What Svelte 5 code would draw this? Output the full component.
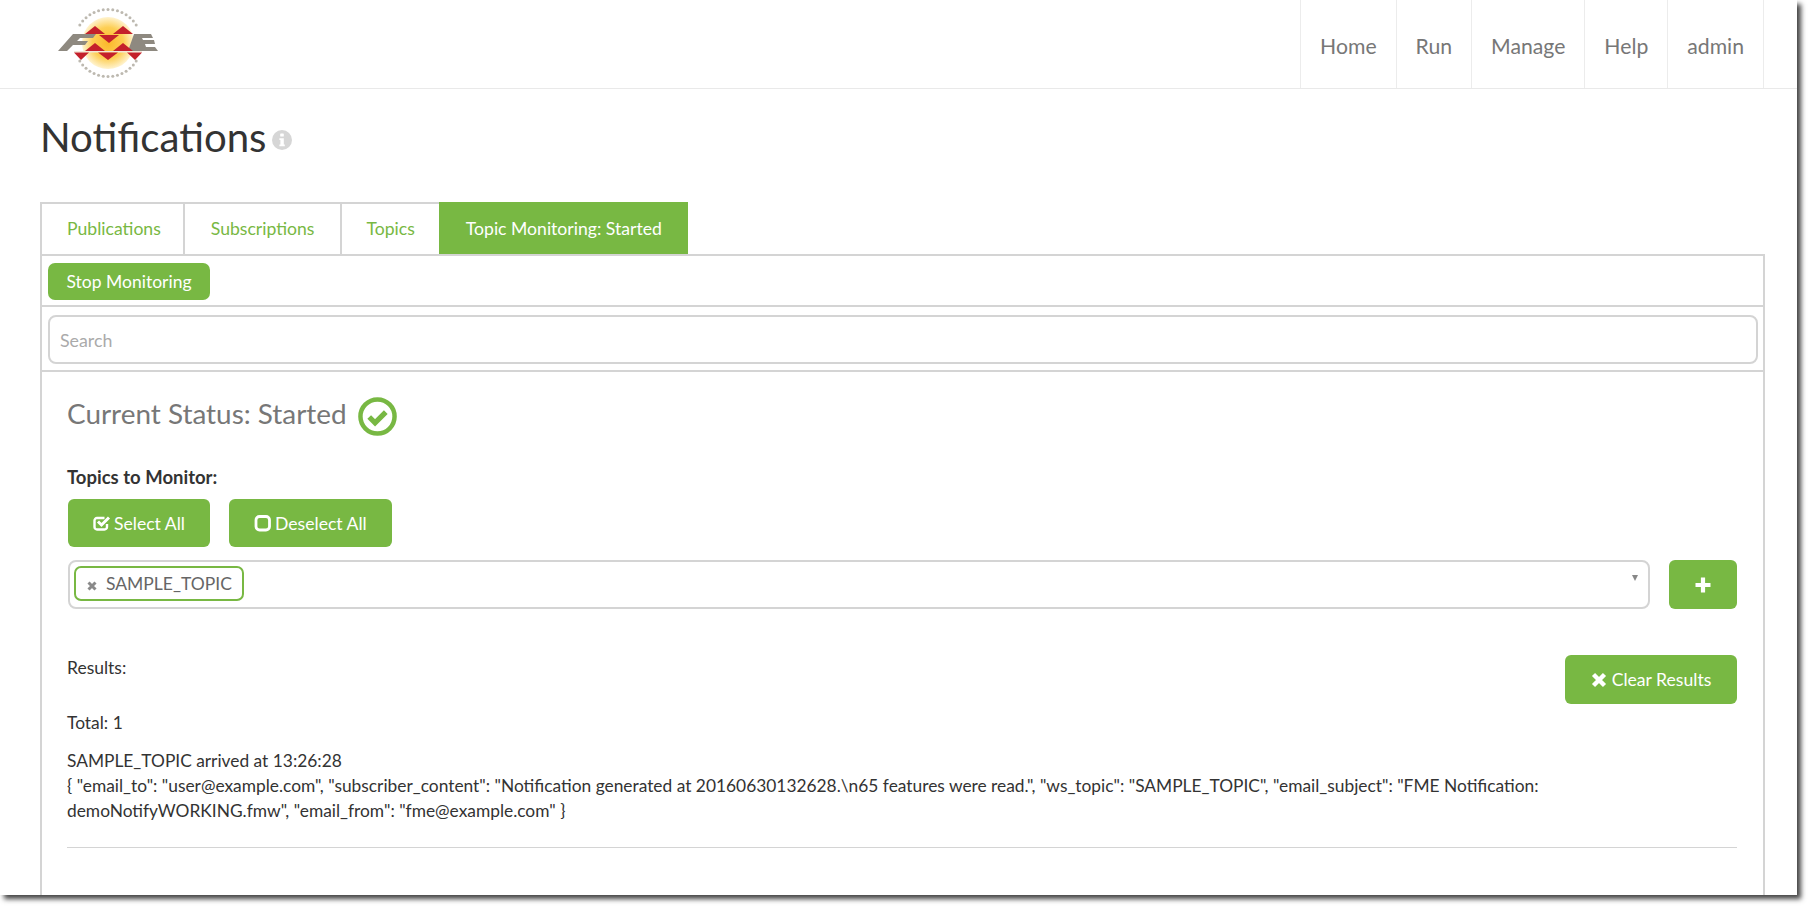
<script lang="ts">
  // FME Server notifications page, topic monitoring tab
  const navItems = ["Home", "Run", "Manage", "Help", "admin"];
  const tabs = ["Publications", "Subscriptions", "Topics"];
  const dots = Array.from({ length: 44 }, (_, i) => {
    const a = (i / 44) * Math.PI * 2;
    return { x: 50 + Math.cos(a) * 33.5, y: 35 + Math.sin(a) * 33.5 };
  }).filter((d) => Math.abs(d.y - 35) > 14);
</script>

<div class="shell">
  <div class="window">
    <header class="topbar">
      <svg class="logo" viewBox="0 0 100 70" width="100" height="70" aria-label="FME">
        <defs>
          <radialGradient id="sun">
            <stop offset="0" stop-color="#fbb82a" />
            <stop offset="0.6" stop-color="#fdcf55" />
            <stop offset="1" stop-color="#fff3cf" />
          </radialGradient>
        </defs>
        {#each dots as d}
          <circle cx={d.x} cy={d.y} r="1.5" fill="#bdb9b0" />
        {/each}
        <circle cx="50" cy="35" r="26" fill="url(#sun)" />
        <!-- left and right slanted marks -->
        <polygon points="0,43 15,26 38,26 35,30 22,30 19,33 30,33 27,37 15,37 9,43" fill="#8e8980" />
        <polygon points="76,26 93,26 95,30 84,30 85,32 96,32 97,36 87,36 88,39 97,39 100,43 70,43" fill="#8e8980" />
        <!-- red triangles -->
        <polygon points="37,18 27,26 47,26" fill="#c4202b" />
        <polygon points="65,18 55,26 75,26" fill="#c4202b" />
        <polygon points="51,35 41,27 61,27" fill="#c4202b" />
        <polygon points="37,35 27,43 47,43" fill="#c4202b" />
        <polygon points="65,35 55,43 75,43" fill="#c4202b" />
        <rect x="16" y="43" width="68" height="1.5" fill="#f2e9d8" />
        <polygon points="23,52 16,44.5 31,44.5" fill="#c4202b" />
        <polygon points="50,52 40,44.5 60,44.5" fill="#c4202b" />
        <polygon points="77,52 69,44.5 84,44.5" fill="#c4202b" />
      </svg>
      <nav class="nav">
        {#each navItems as item}
          <a class="nav-item" href="#top">{item}</a>
        {/each}
      </nav>
    </header>

    <main class="page">
      <h1 class="title">
        Notifications
        <svg class="info" viewBox="0 0 20 20" width="20" height="20">
          <circle cx="10" cy="10" r="10" fill="#d6d6d6" />
          <rect x="8.2" y="3.5" width="3.6" height="3" rx="0.6" fill="#fff" />
          <path d="M7.4 8.2h4.4v6.2h1v1.9H7.4v-1.9h1v-4.3h-1z" fill="#fff" />
        </svg>
      </h1>

      <div class="tabs">
        {#each tabs as tab}
          <a class="tab" href="#top">{tab}</a>
        {/each}
        <a class="tab active" href="#top">Topic Monitoring: Started</a>
      </div>

      <section class="panel">
        <div class="row toolbar">
          <button class="btn stop">Stop Monitoring</button>
        </div>
        <div class="row searchrow">
          <input class="search" placeholder="Search" />
        </div>

        <div class="body">
          <h2 class="status">
            <span class="status-text">Current Status: Started</span>
            <svg viewBox="0 0 40 40" width="39" height="39">
              <circle cx="20" cy="20" r="17.5" fill="none" stroke="#78b843" stroke-width="4.6" />
              <path d="M11.5 20.5l6 6 11-11" fill="none" stroke="#78b843" stroke-width="5.4" />
            </svg>
          </h2>

          <div class="label">Topics to Monitor:</div>
          <div class="actions">
            <button class="btn big">
              <svg viewBox="0 0 18 18" width="18" height="18">
                <path d="M14 10v3a2.5 2.5 0 0 1-2.5 2.5H4A2.5 2.5 0 0 1 1.5 13V6.5A2.5 2.5 0 0 1 4 4h7.5" fill="none" stroke="#fff" stroke-width="2.4" />
                <path d="M5 7.5l3.5 3.5 7.5-7.5" fill="none" stroke="#fff" stroke-width="3" />
              </svg>
              Select All
            </button>
            <button class="btn big">
              <svg viewBox="0 0 18 18" width="18" height="18">
                <rect x="2" y="2.5" width="13.5" height="13.5" rx="3.5" fill="none" stroke="#fff" stroke-width="2.8" />
              </svg>
              Deselect All
            </button>
          </div>

          <div class="picker">
            <div class="select">
              <span class="chip">
                <svg viewBox="0 0 10 10" width="10" height="10">
                  <path d="M1.5 1.5l7 7M8.5 1.5l-7 7" stroke="#8a8a8a" stroke-width="3" />
                </svg>
                SAMPLE_TOPIC
              </span>
              <span class="caret"></span>
            </div>
            <button class="btn add" aria-label="Add">
              <svg viewBox="0 0 18 18" width="18" height="18">
                <path d="M9 1.5v15M1.5 9h15" stroke="#fff" stroke-width="4.2" />
              </svg>
            </button>
          </div>

          <div class="results-head">
            <div class="results-label">Results:</div>
            <button class="btn big clear">
              <svg viewBox="0 0 16 16" width="16" height="16">
                <path d="M2.5 2.5l11 11M13.5 2.5l-11 11" stroke="#fff" stroke-width="4.4" />
              </svg>
              Clear Results
            </button>
          </div>

          <div class="total">Total: 1</div>

          <p class="message">
            SAMPLE_TOPIC arrived at 13:26:28<br />
            {'{ "email_to": "user@example.com", "subscriber_content": "Notification generated at 20160630132628.\\n65 features were read.", "ws_topic": "SAMPLE_TOPIC", "email_subject": "FME Notification: demoNotifyWORKING.fmw", "email_from": "fme@example.com" }'}
          </p>
          <hr class="rule" />
        </div>
      </section>
    </main>
  </div>
</div>

<style>
  :global(body) {
    margin: 0;
    background: #fff;
    font-family: Lato, "Open Sans", sans-serif;
    color: #333;
  }

  .shell {
    height: 910px;
    overflow: hidden;
  }

  .window {
    width: 1797px;
    height: 895px;
    background: #fff;
    box-shadow: 4px 4px 5px #444;
    overflow: hidden;
    display: flex;
    flex-direction: column;
  }

  .topbar {
    height: 88px;
    border-bottom: 1px solid #e9e9e9;
    display: flex;
    justify-content: space-between;
    flex: none;
  }

  .logo {
    margin: 8px 0 0 58px;
  }

  .nav {
    display: flex;
    margin-right: 33px;
    border-right: 1px solid #ececec;
  }

  .nav-item {
    border-left: 1px solid #ececec;
    padding: 0 19px;
    line-height: 92px;
    font-size: 21.2px;
    color: #777;
    text-decoration: none;
  }

  .page {
    flex: 1;
    padding: 0 32px 0 40px;
    display: flex;
    flex-direction: column;
    min-height: 0;
  }

  .title {
    margin: 23px 0 40px;
    height: 50px;
    font-size: 40.2px;
    line-height: 50px;
    font-weight: 400;
    color: #333;
    display: flex;
    align-items: center;
    gap: 5px;
  }

  .info {
    margin-top: 5px;
  }

  .tabs {
    display: flex;
    height: 52px;
  }

  .tab {
    border: solid #d4d4d4;
    border-width: 2px 0 0 2px;
    padding: 0 24px;
    line-height: 50px;
    font-size: 17.6px;
    color: #78b843;
    text-decoration: none;
  }

  .tab:nth-child(1) {
    padding: 0 22px 0 25px;
  }

  .tab:nth-child(2) {
    padding: 0 26px;
  }

  .tab.active {
    background: #78b843;
    border-color: #78b843;
    color: #fff;
    padding: 0 26px 0 25px;
  }

  .panel {
    flex: 1;
    border: solid #d4d4d4;
    border-width: 2px 2px 0;
    display: flex;
    flex-direction: column;
  }

  .row {
    border-bottom: 2px solid #d4d4d4;
    padding: 0 5px 0 6px;
  }

  .toolbar {
    height: 51px;
    box-sizing: border-box;
    padding-top: 7px;
  }

  .searchrow {
    height: 65px;
    box-sizing: border-box;
    padding-top: 8px;
  }

  .btn {
    background: #78b843;
    border: none;
    color: #fff;
    font-family: inherit;
    font-size: 17.6px;
    border-radius: 6px;
    display: inline-flex;
    align-items: center;
    justify-content: center;
    gap: 3px;
    padding: 0;
  }

  .stop {
    width: 162px;
    height: 37px;
    border-radius: 7px;
    font-size: 17.5px;
  }

  .search {
    display: block;
    width: 100%;
    height: 49px;
    box-sizing: border-box;
    border: 2px solid #d4d4d4;
    border-radius: 8px;
    padding: 0 10px;
    font-family: inherit;
    font-size: 17.8px;
    outline: none;
  }

  .search::placeholder {
    color: #aaa;
  }

  .body {
    padding: 20px 26px 0 25px;
  }

  .status {
    margin: 0;
    height: 44px;
    display: flex;
    align-items: center;
    gap: 11px;
    font-size: 27.9px;
    font-weight: 400;
    color: #777;
  }

  .status svg {
    margin-top: 4px;
  }

  .status-text {
    margin-top: -2px;
  }

  .label {
    margin-top: 29px;
    line-height: 24px;
    font-size: 18.5px;
    font-weight: 700;
  }

  .actions {
    display: flex;
    gap: 19px;
    margin: 10px 0 0 1px;
  }

  .big {
    height: 48px;
    padding: 0 25px;
  }

  .picker {
    display: flex;
    align-items: stretch;
    gap: 19px;
    height: 49px;
    margin: 13px 0 0 1px;
  }

  .select {
    flex: 1;
    position: relative;
    border: 2px solid #d4d4d4;
    border-radius: 8px;
    padding: 4px;
    box-sizing: border-box;
  }

  .chip {
    display: inline-flex;
    align-items: center;
    gap: 9px;
    height: 35px;
    box-sizing: border-box;
    padding: 0 10px 0 11px;
    border: 2px solid #78b843;
    border-radius: 7px;
    font-size: 17.5px;
    color: #666;
  }

  .chip svg {
    margin-top: 5px;
  }

  .caret {
    position: absolute;
    right: 10px;
    top: 13px;
    border: solid transparent;
    border-width: 6px 3.5px 0;
    border-top-color: #888;
  }

  .add {
    width: 68px;
  }

  .results-head {
    display: flex;
    justify-content: space-between;
    margin-top: 46px;
  }

  .results-label {
    font-size: 17.5px;
    line-height: 25px;
  }

  .clear {
    height: 49px;
    width: 172px;
    padding: 0;
    gap: 5px;
  }

  .total {
    margin-top: 6px;
    font-size: 17.4px;
    line-height: 25px;
  }

  .message {
    margin: 13px 0 0;
    font-size: 17.35px;
    line-height: 25px;
  }

  .rule {
    margin: 24px 0 0;
    border: none;
    border-top: 1px solid #d4d4d4;
  }
</style>
